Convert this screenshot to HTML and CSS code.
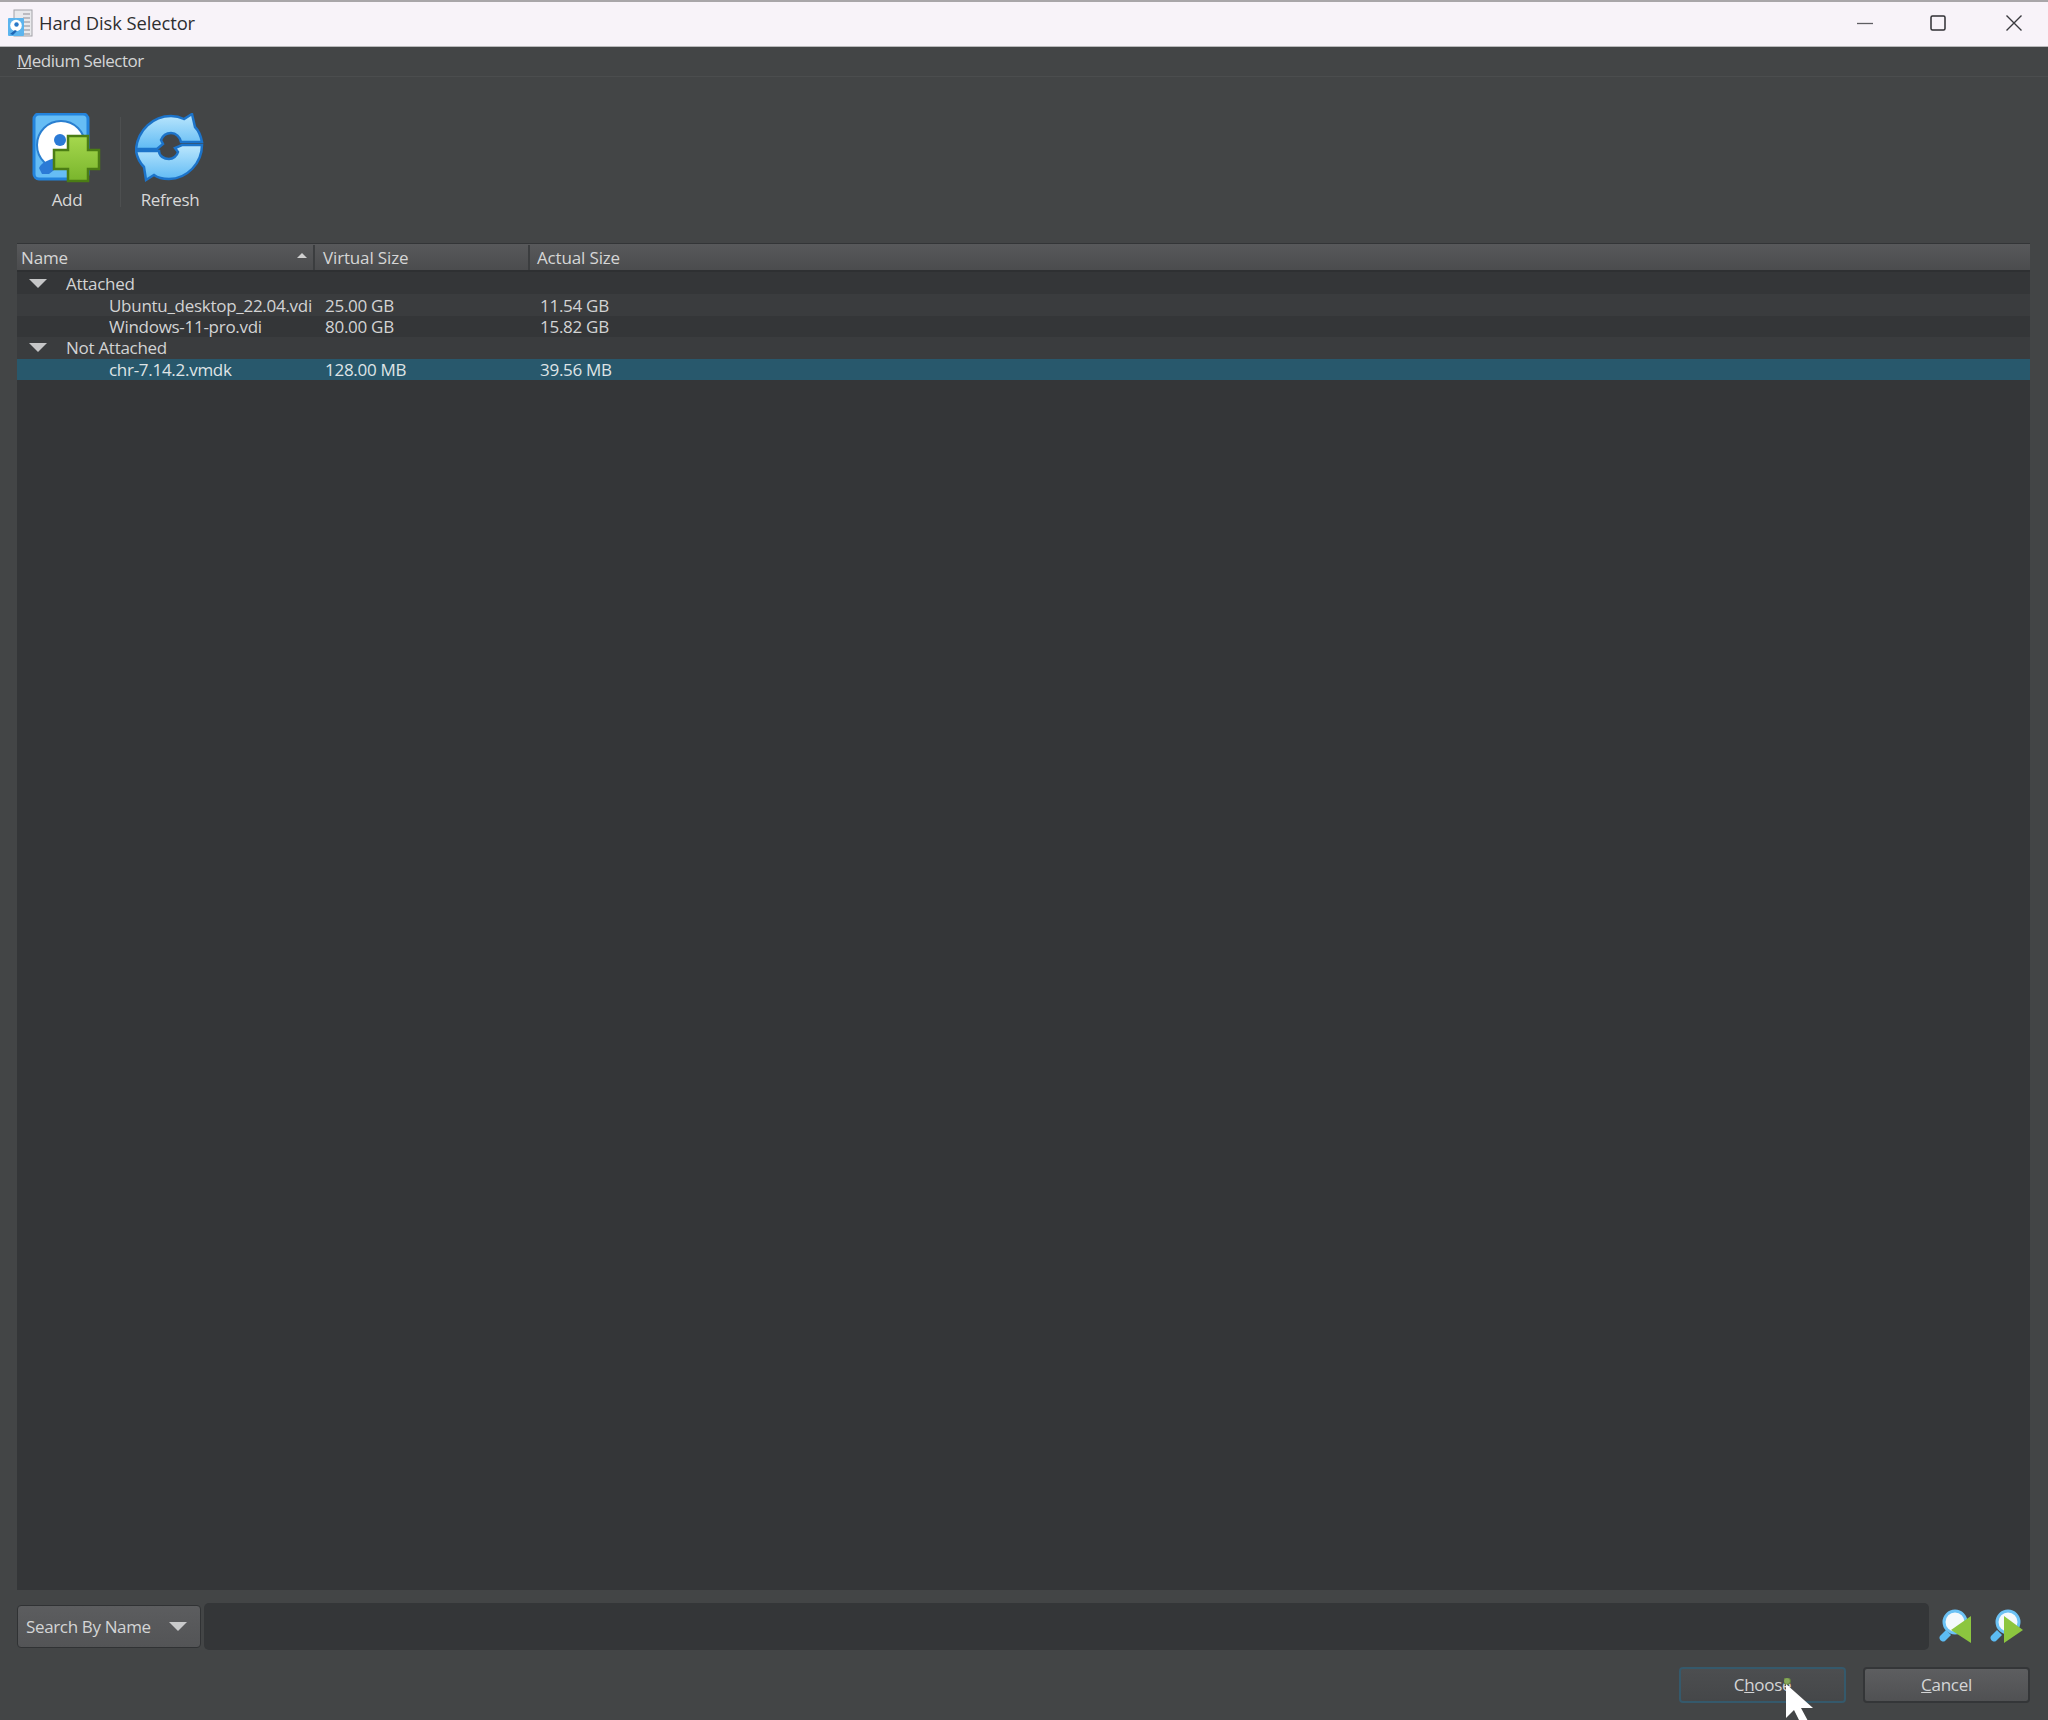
FILE: index.html
```html
<!DOCTYPE html>
<html lang="en">
<head>
<meta charset="utf-8">
<title>Hard Disk Selector</title>
<link rel="stylesheet" href="styles.css">
</head>
<body>
<div class="window">
  <header class="titlebar">
    <svg class="app-icon" width="26" height="28" viewBox="0 0 26 28">
      <rect x="7" y="1" width="18" height="26" fill="#e9e9ec" stroke="#a2a2a8"/>
      <path d="M16 5h7M16 9h7M16 13h7M16 17h7M16 21h7M16 25h7" stroke="#8d8d95"/>
      <rect x="1" y="9" width="16" height="18" rx="1" fill="#5cb4ee"/>
      <circle cx="9" cy="16.5" r="5.8" fill="#fff"/>
      <circle cx="9.5" cy="15.5" r="2.2" fill="#2a78c8"/>
      <path d="M3 25l5-4 2 1-4 4z" fill="#1f66b5"/>
    </svg>
    <span class="title-text">Hard Disk Selector</span>
    <div class="win-controls">
      <svg class="win-btn" width="16" height="16" viewBox="0 0 16 16"><path d="M0 8.5h16" stroke="#5e5e62" stroke-width="1.3"/></svg>
      <svg class="win-btn" width="16" height="16" viewBox="0 0 16 16"><rect x="1" y="1" width="14" height="14" rx="1.5" fill="none" stroke="#2f2f33" stroke-width="1.5"/></svg>
      <svg class="win-btn win-close" width="16" height="16" viewBox="0 0 16 16"><path d="M0.5 0.5l15 15M15.5 0.5l-15 15" stroke="#3a3a3e" stroke-width="1.4"/></svg>
    </div>
  </header>

  <nav class="menubar"><span class="menu-item"><u>M</u>edium Selector</span></nav>

  <section class="toolbar">
    <div class="tool tool-add">
      <svg width="70" height="70" viewBox="0 0 70 70">
        <defs>
          <linearGradient id="plusG" x1="0" y1="0" x2="0" y2="1"><stop offset="0" stop-color="#a6d84e"/><stop offset="1" stop-color="#79b52c"/></linearGradient>
          <linearGradient id="refG" x1="0" y1="0" x2="0" y2="1"><stop offset="0" stop-color="#bce7fd"/><stop offset="1" stop-color="#5fbaf4"/></linearGradient>
        </defs>
        <rect x="2" y="1" width="54" height="65" rx="5" fill="#66bdf5" stroke="#2383dc" stroke-width="3"/>
        <circle cx="29" cy="32" r="24" fill="#fff" stroke="#2a7fd0" stroke-width="2"/>
        <circle cx="28" cy="27" r="6" fill="#2b7ad6"/>
        <path d="M7 55c2-6 12-9 20-11l4 6-14 11H10z" fill="#2b7ad6"/>
        <path d="M36 23h20v14h11v19H56v12H36V56H22V37h14z" fill="url(#plusG)" stroke="#4b7d14" stroke-width="2.5"/>
      </svg>
      <span class="tool-label">Add</span>
    </div>
    <div class="tool-sep"></div>
    <div class="tool tool-refresh">
      <svg width="70" height="70" viewBox="0 0 70 70">
        <path d="M1 36C3 17 18 3 36 3c5 0 9 1 13 3l8-5 3 13c4 4 6 10 7 15H46c-1-5-5-9-10-9-4 0-8 2-10 7l2 4-6 5z" fill="url(#refG)" stroke="#1c73c9" stroke-width="2.5"/>
        <path d="M1 38h23c0 5 5 8 10 8 4 0 8-3 9-7l-3-4 7-3h20c0 18-15 34-33 34-6 0-11-1-15-4l-8 5-2-13C4 49 2 44 1 38z" fill="url(#refG)" stroke="#1c73c9" stroke-width="2.5"/>
      </svg>
      <span class="tool-label">Refresh</span>
    </div>
  </section>

  <section class="table">
    <div class="thead">
      <div class="th th-name">Name<span class="sort-arrow"></span></div>
      <div class="th th-virtual">Virtual Size</div>
      <div class="th th-actual">Actual Size</div>
    </div>
    <div class="tbody">
      <div class="row group"><span class="tri"></span><span class="group-name">Attached</span></div>
      <div class="row item alt"><span class="c-name">Ubuntu_desktop_22.04.vdi</span><span class="c-virtual">25.00 GB</span><span class="c-actual">11.54 GB</span></div>
      <div class="row item"><span class="c-name">Windows-11-pro.vdi</span><span class="c-virtual">80.00 GB</span><span class="c-actual">15.82 GB</span></div>
      <div class="row group alt"><span class="tri"></span><span class="group-name">Not Attached</span></div>
      <div class="row item selected"><span class="c-name">chr-7.14.2.vmdk</span><span class="c-virtual">128.00 MB</span><span class="c-actual">39.56 MB</span></div>
    </div>
  </section>

  <section class="searchbar">
    <div class="combo"><span>Search By Name</span><span class="combo-arrow"></span></div>
    <div class="search-input"></div>
    <svg class="search-btn" width="36" height="36" viewBox="0 0 36 36">
      <path d="M3 27l6-6 5 5-6 6c-3 2-7-2-5-5z" fill="#5cbcf3"/>
      <circle cx="18" cy="13" r="11" fill="#f4f9fc" stroke="#6cc2f5" stroke-width="3"/>
      <path d="M34 7v27L14 21z" fill="#8cc63f"/>
    </svg>
    <svg class="search-btn" width="36" height="36" viewBox="0 0 36 36">
      <path d="M3 27l6-6 5 5-6 6c-3 2-7-2-5-5z" fill="#5cbcf3"/>
      <circle cx="20" cy="13" r="11" fill="#f4f9fc" stroke="#6cc2f5" stroke-width="3"/>
      <path d="M16 7v27l19-13z" fill="#8cc63f"/>
    </svg>
  </section>

  <footer class="buttons">
    <div class="btn btn-default">C<u>h</u>oose</div>
    <div class="btn"><u>C</u>ancel</div>
  </footer>

  <svg class="cursor" width="32" height="46" viewBox="0 0 32 46">
    <circle cx="3" cy="3" r="3.5" fill="#86a85a" stroke="#5d7a3a"/>
    <path d="M2 6v34l8-8 7 14 7-3-7-13h12z" fill="#fff"/>
  </svg>
</div>
</body>
</html>
```

FILE: styles.css
```css
* { box-sizing: border-box; }
html, body { margin: 0; padding: 0; }
body {
  width: 2048px;
  height: 1720px;
  overflow: hidden;
  font-family: "Open Sans", "Noto Sans", sans-serif;
  font-size: 17px;
  color: #d4d5d6;
  background: #434546;
}
.window {
  position: relative;
  width: 2048px;
  height: 1720px;
  display: flex;
  flex-direction: column;
  background: #434546;
}
.titlebar {
  height: 47px;
  flex: none;
  display: flex;
  align-items: center;
  padding: 0 26px 2px 7px;
  background: #f8f3f9;
  border-top: 2px solid #a9a6a9;
  border-bottom: 1px solid #b9b9bb;
  color: #2e2e30;
}
.app-icon { flex: none; }
.title-text { margin: 0 0 2px 6px; font-size: 18.4px; letter-spacing: -0.1px; }
.win-controls { margin-left: auto; display: flex; align-items: center; gap: 57px; }
.win-btn { display: block; }
.win-close { margin-left: 3px; }
.menubar {
  height: 30px;
  flex: none;
  display: flex;
  align-items: center;
  padding: 0 0 2px 17px;
  border-bottom: 1px solid #4b4d4e;
}
.menu-item { font-size: 17px; letter-spacing: -0.5px; }
.toolbar {
  height: 166px;
  flex: none;
  display: flex;
  align-items: flex-start;
  padding: 36px 0 0 32px;
}
.tool { display: flex; flex-direction: column; align-items: center; }
.tool svg { display: block; }
.tool-add { width: 70px; }
.tool-refresh { width: 70px; margin-left: 14px; }
.tool-label { margin-top: 5px; font-size: 17px; letter-spacing: -0.3px; color: #d8d8d8; line-height: 23px; }
.tool-sep { width: 1px; height: 90px; margin: 4px 0 0 18px; background: #4d4f50; }
.table {
  height: 1347px;
  flex: none;
  margin: 0 18px 0 17px;
  background: #343638;
  display: flex;
  flex-direction: column;
}
.thead {
  height: 29px;
  flex: none;
  display: flex;
  padding-top: 1px;
  background: linear-gradient(#58595b, #4b4c4e);
  border-bottom: 2px solid #2e3032;
  border-top: 1px solid #333537;
}
.th {
  display: flex;
  align-items: center;
  font-size: 17px;
  letter-spacing: -0.15px;
  color: #d6d6d6;
  border-right: 2px solid #3b3d3f;
}
.th-name { width: 298px; padding-left: 4px; position: relative; justify-content: space-between; padding-right: 6px; }
.th-virtual { width: 215px; padding-left: 8px; }
.th-actual { flex: 1; padding-left: 7px; border-right: 0; }
.sort-arrow { width: 0; height: 0; border-left: 5px solid transparent; border-right: 5px solid transparent; border-bottom: 5px solid #d0d0d0; margin-top: -4px; }
.tbody { display: flex; flex-direction: column; padding-top: 1px; }
.row { height: 21.4px; display: flex; align-items: center; font-size: 17px; letter-spacing: -0.28px; color: #d2d3d4; white-space: nowrap; }
.row.alt { background: #3a3c3e; }
.row.selected { background: #28586c; color: #dfe4e6; }
.tri { width: 0; height: 0; margin-left: 12px; border-left: 9px solid transparent; border-right: 9px solid transparent; border-top: 9px solid #c5c6c7; }
.group-name { margin-left: 19px; }
.c-name { width: 308px; padding-left: 92px; }
.c-virtual { width: 215px; padding-left: 0; }
.c-actual { padding-left: 0; }
.searchbar {
  height: 47px;
  flex: none;
  display: flex;
  align-items: center;
  margin: 13px 0 0 17px;
}
.combo {
  width: 184px;
  height: 43px;
  display: flex;
  align-items: center;
  justify-content: space-between;
  padding: 0 13px 0 8px;
  background: linear-gradient(#5c5d5f, #535456);
  border: 1px solid #303234;
  border-radius: 4px;
  font-size: 17px;
  letter-spacing: -0.35px;
}
.combo-arrow { width: 0; height: 0; border-left: 9px solid transparent; border-right: 9px solid transparent; border-top: 9px solid #c9cacb; }
.search-input {
  width: 1725px;
  height: 47px;
  margin-left: 3px;
  background: #343638;
  border-radius: 5px;
}
.search-btn { flex: none; margin-left: 8px; display: block; }
.search-btn + .search-btn { margin-left: 15px; }
.buttons {
  flex: none;
  display: flex;
  justify-content: flex-end;
  gap: 17px;
  margin: 17px 18px 0 0;
}
.btn {
  width: 167px;
  height: 36px;
  padding-bottom: 2px;
  display: flex;
  align-items: center;
  justify-content: center;
  background: linear-gradient(#5d5e60, #505153);
  border: 2px solid #343638;
  border-radius: 4px;
  font-size: 17px;
  letter-spacing: -0.3px;
}
.btn-default { background: linear-gradient(#4c4e50, #454749); border-color: #35596b; }
.cursor { position: absolute; left: 1784px; top: 1678px; }
```
